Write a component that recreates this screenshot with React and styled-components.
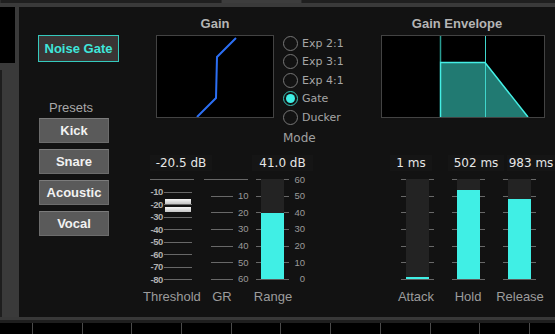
import React from "react";
import styled, { createGlobalStyle } from "styled-components";

const GlobalStyle = createGlobalStyle`
  html, body {
    margin: 0;
    padding: 0;
    background: #121212;
  }
  body {
    width: 555px;
    height: 334px;
    overflow: hidden;
    font-family: "Liberation Sans", Arial, sans-serif;
  }
`;

const CYAN = "#40efe5";

const Screen = styled.div`
  width: 555px;
  height: 334px;
  display: flex;
  flex-direction: column;
  background: #121212;
`;

const TopStrip = styled.div`
  height: 3px;
  display: flex;
  background: #1e1e1e;
`;

const TopSeg = styled.div`
  width: ${(p) => (p.$w ? `${p.$w}px` : "auto")};
  flex: ${(p) => (p.$w ? "none" : 1)};
  background: ${(p) => (p.$lit ? "#3d3d3d" : "#1f1f1f")};
  border-left: 1px solid #2c2c2c;
`;

const TopBand = styled.div`
  height: 4px;
  background: #3a3a3a;
`;

const Body = styled.div`
  height: 310px;
  display: flex;
`;

const LeftRail = styled.div`
  width: 19px;
  display: flex;
  flex-direction: column;
  background: #3a3a3a;
`;

const RailBox = styled.div`
  width: 15px;
  height: 56px;
  background: #000;
`;

const RailTrack = styled.div`
  flex: 1;
  margin-top: 7px;
  border-left: 2px solid #1e1e1e;
`;

const Panel = styled.div`
  flex: 1;
  display: flex;
  background: #121212;
`;

/* left column */
const LeftCol = styled.div`
  width: 81px;
  margin-left: 19px;
  padding-top: 28px;
  display: flex;
  flex-direction: column;
`;

const ModeButton = styled.div`
  height: 27px;
  box-sizing: border-box;
  border: 1px solid #35c9bd;
  background: #3a3434;
  color: #3fe6db;
  font-weight: bold;
  font-size: 13px;
  display: flex;
  align-items: center;
  justify-content: center;
`;

const PresetsLabel = styled.div`
  margin-top: 39px;
  padding-left: 11px;
  font-size: 13px;
  line-height: 14px;
  color: #a8a8a8;
`;

const PresetButton = styled.div`
  width: 70px;
  height: 25px;
  margin-left: 1px;
  margin-top: ${(p) => (p.$first ? 3 : 6)}px;
  box-sizing: border-box;
  border: 1px solid #6c6c6c;
  border-top-color: #7c7c7c;
  background: #5a5a5a;
  color: #f2f2f2;
  font-weight: bold;
  font-size: 13px;
  display: flex;
  align-items: center;
  justify-content: center;
`;

/* columns */
const Column = styled.div`
  width: ${(p) => p.$w}px;
  margin-left: ${(p) => p.$ml}px;
  padding-top: 9px;
  display: flex;
  flex-direction: column;
`;

const TopBlock = styled.div`
  height: 139px;
  display: flex;
  align-items: flex-start;
`;

const GraphCol = styled.div`
  margin-left: ${(p) => p.$ml || 0}px;
  width: ${(p) => p.$w}px;
  display: flex;
  flex-direction: column;
`;

const Title = styled.div`
  height: 16px;
  line-height: 16px;
  padding-right: ${(p) => p.$shift || 0}px;
  text-align: center;
  font-weight: bold;
  font-size: 13px;
  color: #b5b5b5;
`;

const Graph = styled.div`
  margin-top: 3px;
  height: 83px;
  box-sizing: border-box;
  border: 1px solid #434343;
  background: #000;
  display: flex;

  svg {
    display: block;
  }
`;

const RadioCol = styled.div`
  margin-left: 9px;
  margin-top: 18px;
  display: flex;
  flex-direction: column;
`;

const RadioRow = styled.div`
  height: 18.5px;
  display: flex;
  align-items: center;
`;

const RadioCircle = styled.div`
  width: 15px;
  height: 15px;
  box-sizing: border-box;
  border-radius: 50%;
  border: ${(p) => (p.$on ? "1.5px solid #38c2b7" : "1px solid #767676")};
  display: flex;
  align-items: center;
  justify-content: center;

  &::after {
    content: "";
    display: ${(p) => (p.$on ? "block" : "none")};
    width: 9px;
    height: 9px;
    border-radius: 50%;
    background: ${CYAN};
  }
`;

const RadioLabel = styled.span`
  margin-left: 4px;
  font-family: "DejaVu Sans", sans-serif;
  font-size: 11px;
  color: #a6a6a6;
`;

const ModeLabel = styled.div`
  margin-top: 3.5px;
  line-height: 16px;
  font-family: "DejaVu Sans", sans-serif;
  font-size: 12px;
  color: #a0a0a0;
`;

/* meters */
const ValueRow = styled.div`
  height: 16px;
  margin-left: ${(p) => p.$ml}px;
  display: flex;
`;

const ValueBox = styled.div`
  width: ${(p) => p.$w}px;
  margin-left: ${(p) => p.$ml || 0}px;
  background: #151515;
  line-height: 16px;
  text-align: center;
  font-family: "DejaVu Sans", sans-serif;
  font-size: 12px;
  color: #e6e6e6;
  white-space: nowrap;
`;

const MeterRow = styled.div`
  height: 101px;
  margin-top: 8px;
  margin-left: ${(p) => p.$ml}px;
  display: flex;
  gap: ${(p) => p.$gap || 0}px;
`;

const Scale = styled.div`
  position: relative;
  width: ${(p) => p.$w}px;
  margin-left: ${(p) => p.$ml || 0}px;
  display: flex;
  flex-direction: column;
  justify-content: space-between;
`;

const ScaleRow = styled.div`
  height: 1px;
  display: flex;
  align-items: center;
`;

const Line = styled.div`
  width: ${(p) => p.$w}px;
  margin-left: ${(p) => p.$ml || 0}px;
  height: 1px;
  flex: none;
  background: #686868;
`;

const TickText = styled.span`
  width: ${(p) => p.$w}px;
  margin-left: ${(p) => p.$ml || 0}px;
  flex: none;
  text-align: right;
  font-size: 9.5px;
  line-height: 10px;
  font-weight: ${(p) => (p.$bold ? "bold" : "normal")};
  letter-spacing: ${(p) => (p.$bold ? "-0.4px" : "0")};
  color: ${(p) => (p.$bold ? "#b0b0b0" : "#9a9a9a")};
`;

const Handle = styled.div`
  position: absolute;
  top: 20px;
  left: 15px;
  width: 26px;
  height: 13px;
  display: flex;
  flex-direction: column;
  justify-content: space-between;
`;

const HandleBar = styled.div`
  height: 5px;
  background: linear-gradient(#f6f6f6, #c4c4c4);
`;

const MeterGroup = styled.div`
  margin-left: ${(p) => p.$ml || 0}px;
  display: flex;
`;

const Bar = styled.div`
  width: ${(p) => p.$w || 23}px;
  box-sizing: border-box;
  background: #232323;
  border-bottom: 1px solid #5c5c5c;
  display: flex;
  flex-direction: column;
  justify-content: flex-end;
`;

const Fill = styled.div`
  background: ${CYAN};
`;

const LabelRow = styled.div`
  height: 16px;
  margin-top: 9px;
  margin-left: ${(p) => p.$ml}px;
  display: flex;
`;

const LabelCell = styled.div`
  width: ${(p) => p.$w}px;
  line-height: 16px;
  text-align: center;
  font-size: 13px;
  color: #9c9c9c;
`;

/* bottom */
const BottomBand = styled.div`
  height: 3px;
  background: #383838;
`;

const BottomDark = styled.div`
  height: 3px;
  background: #1e1e1e;
`;

const Keys = styled.div`
  height: 11px;
  display: flex;
  background: #000;
`;

const Key = styled.div`
  width: ${(p) => (p.$w ? `${p.$w}px` : "auto")};
  flex: ${(p) => (p.$w ? "none" : 1)};
  background: #000;
  border-left: ${(p) => (p.$first ? "none" : "1px solid #4a4a4a")};
`;

const TickCol = ({ n = 7 }) => (
  <Scale $w={5}>
    {Array.from({ length: n }).map((_, i) => (
      <ScaleRow key={i}>
        <Line $w={5} />
      </ScaleRow>
    ))}
  </Scale>
);

const VMeter = ({ fill, ml }) => (
  <MeterGroup $ml={ml}>
    <TickCol />
    <Bar>
      <Fill style={{ height: fill }} />
    </Bar>
    <TickCol />
  </MeterGroup>
);

const radios = ["Exp 2:1", "Exp 3:1", "Exp 4:1", "Gate", "Ducker"];
const presets = ["Kick", "Snare", "Acoustic", "Vocal"];
const threshTicks = ["-10", "-20", "-30", "-40", "-50", "-60", "-70", "-80"];
const grTicks = ["10", "20", "30", "40", "50", "60"];
const rangeTicks = ["60", "50", "40", "30", "20", "10", "0"];

export default function App() {
  return (
    <Screen>
      <GlobalStyle />
      <TopStrip>
        <TopSeg $w={220} />
        <TopSeg $w={79} $lit />
        <TopSeg />
      </TopStrip>
      <TopBand />
      <Body>
        <LeftRail>
          <RailBox />
          <RailTrack />
        </LeftRail>
        <Panel>
          <LeftCol>
            <ModeButton>Noise Gate</ModeButton>
            <PresetsLabel>Presets</PresetsLabel>
            {presets.map((p, i) => (
              <PresetButton key={p} $first={i === 0}>
                {p}
              </PresetButton>
            ))}
          </LeftCol>

          <Column $w={210} $ml={21}>
            <TopBlock>
              <GraphCol $ml={16} $w={118}>
                <Title>Gain</Title>
                <Graph>
                  <svg width="116" height="81">
                    <polyline
                      points="40,81 59,62 60,21 79,2"
                      fill="none"
                      stroke="#2c6ff4"
                      strokeWidth="2"
                    />
                  </svg>
                </Graph>
              </GraphCol>
              <RadioCol>
                {radios.map((r) => (
                  <RadioRow key={r}>
                    <RadioCircle $on={r === "Gate"} />
                    <RadioLabel>{r}</RadioLabel>
                  </RadioRow>
                ))}
                <ModeLabel>Mode</ModeLabel>
              </RadioCol>
            </TopBlock>

            <ValueRow $ml={10}>
              <ValueBox $w={62}>-20.5 dB</ValueBox>
              <ValueBox $w={61} $ml={40}>
                41.0 dB
              </ValueBox>
            </ValueRow>

            <MeterRow $ml={10}>
              <Scale $w={44}>
                <ScaleRow>
                  <Line $w={44} />
                </ScaleRow>
                {threshTicks.map((t) => (
                  <ScaleRow key={t}>
                    <TickText $w={13} $bold>
                      {t}
                    </TickText>
                    <Line $w={28} $ml={1} />
                  </ScaleRow>
                ))}
                <Handle>
                  <HandleBar />
                  <HandleBar />
                </Handle>
              </Scale>

              <Scale $w={44} $ml={10}>
                <ScaleRow>
                  <Line $w={44} />
                </ScaleRow>
                {grTicks.map((t) => (
                  <ScaleRow key={t}>
                    <Line $w={22} $ml={7} />
                    <TickText $w={10} $ml={5}>
                      {t}
                    </TickText>
                  </ScaleRow>
                ))}
              </Scale>

              <MeterGroup $ml={8}>
                <TickCol />
                <Bar>
                  <Fill style={{ height: 66 }} />
                </Bar>
                <TickCol />
                <Scale $w={12} $ml={4}>
                  {rangeTicks.map((t) => (
                    <ScaleRow key={t}>
                      <TickText $w={12}>{t}</TickText>
                    </ScaleRow>
                  ))}
                </Scale>
              </MeterGroup>
            </MeterRow>

            <LabelRow $ml={3}>
              <LabelCell $w={56}>Threshold</LabelCell>
              <LabelCell $w={46}>GR</LabelCell>
              <LabelCell $w={56}>Range</LabelCell>
            </LabelRow>
          </Column>

          <Column $w={174} $ml={31}>
            <TopBlock>
              <GraphCol $w={164}>
                <Title $shift={12}>Gain Envelope</Title>
                <Graph>
                  <svg width="162" height="81">
                    <polygon points="58,81 58,26 103,26 146,81" fill="#217a72" />
                    <line x1="58.5" y1="0" x2="58.5" y2="26" stroke="#2a9c92" strokeWidth="1.5" />
                    <line x1="103.5" y1="0" x2="103.5" y2="81" stroke="#3fd6cc" strokeWidth="1" />
                    <polyline
                      points="58.5,81 58.5,26.5 103,26.5 146,81"
                      fill="none"
                      stroke="#45efe5"
                      strokeWidth="1.5"
                    />
                  </svg>
                </Graph>
              </GraphCol>
            </TopBlock>

            <ValueRow $ml={9}>
              <ValueBox $w={42}>1 ms</ValueBox>
              <ValueBox $w={56} $ml={16}>
                502 ms
              </ValueBox>
              <ValueBox $w={48} $ml={3}>
                983 ms
              </ValueBox>
            </ValueRow>

            <MeterRow $ml={20} $gap={18}>
              <VMeter fill={2} />
              <VMeter fill={89} />
              <VMeter fill={80} />
            </MeterRow>

            <LabelRow $ml={9}>
              <LabelCell $w={52}>Attack</LabelCell>
              <LabelCell $w={52}>Hold</LabelCell>
              <LabelCell $w={52}>Release</LabelCell>
            </LabelRow>
          </Column>
        </Panel>
      </Body>
      <BottomBand />
      <BottomDark />
      <Keys>
        <Key $w={32} $first />
        {Array.from({ length: 10 }).map((_, i) => (
          <Key key={i} $w={48.7} />
        ))}
        <Key />
      </Keys>
    </Screen>
  );
}
